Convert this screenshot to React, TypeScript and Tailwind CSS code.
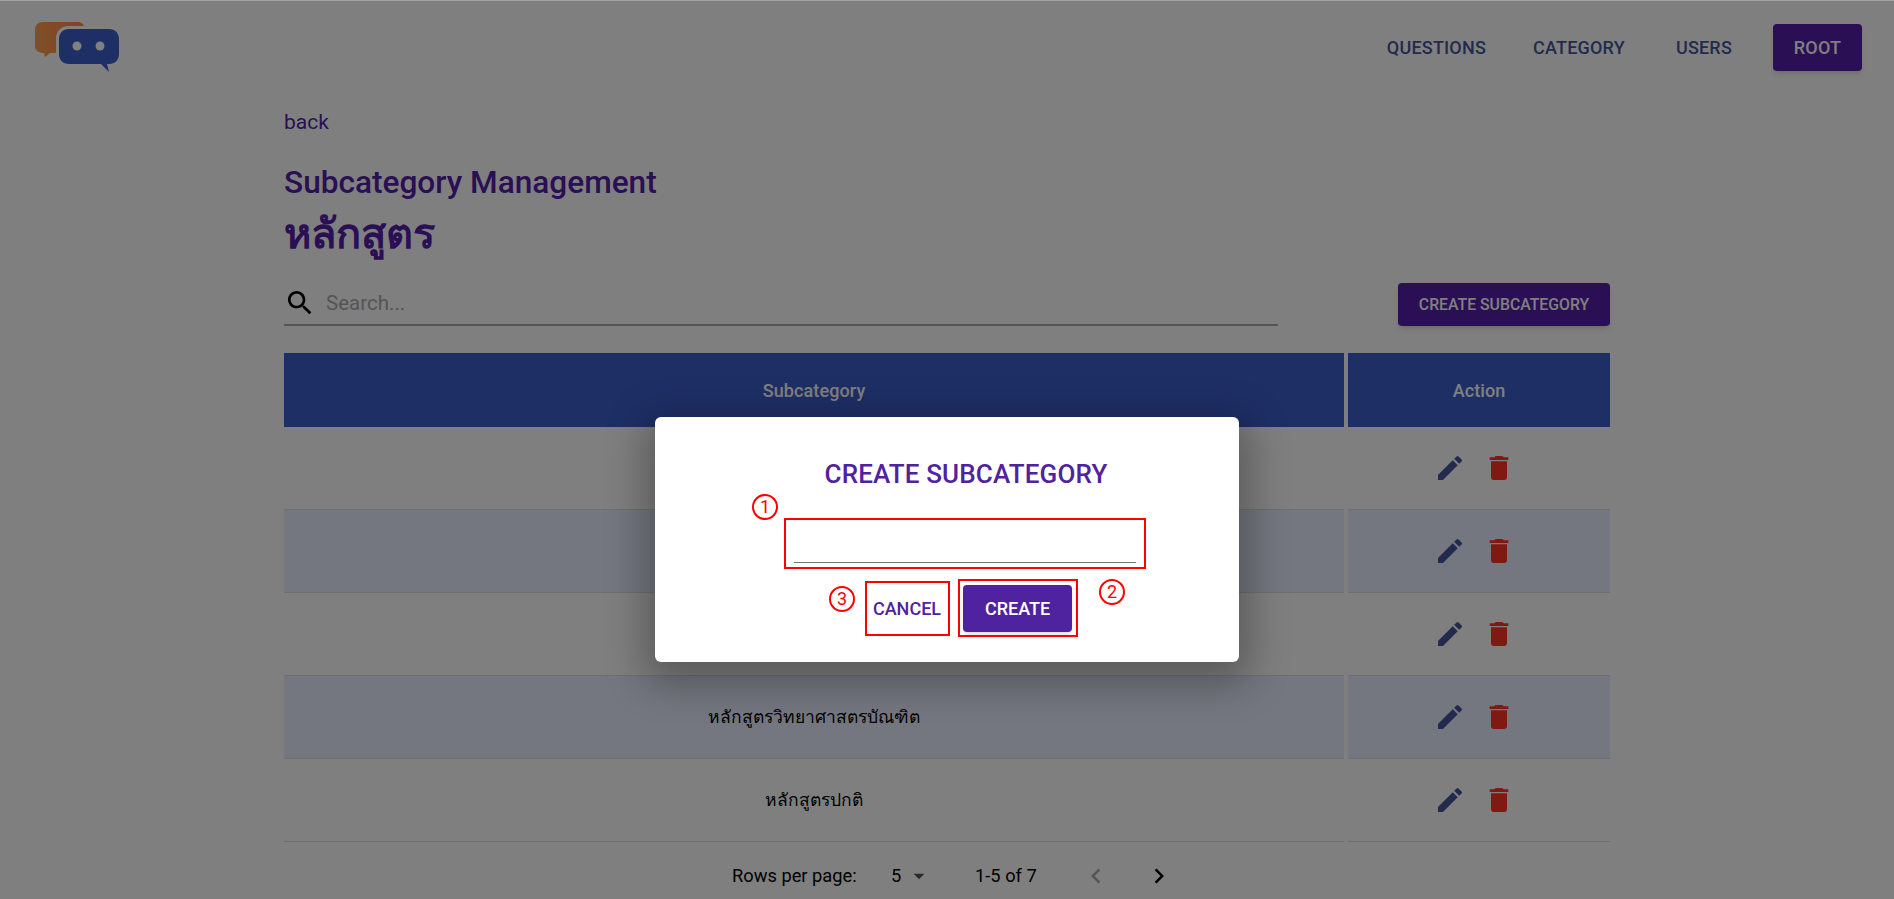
const rows = [
  { name: '', tinted: false },
  { name: '', tinted: true },
  { name: '', tinted: false },
  { name: 'หลักสูตรวิทยาศาสตรบัณฑิต', tinted: true },
  { name: 'หลักสูตรปกติ', tinted: false },
];

// The logo sits above the dialog backdrop, so its colours are the dimmed ones
function Logo() {
  return (
    <svg width="86" height="51" viewBox="0 0 86 51" className="relative z-10 block">
      <defs>
        <linearGradient id="orange" x1="0" y1="0" x2="1" y2="0">
          <stop offset="0" stopColor="#7d5026" />
          <stop offset="1" stopColor="#864026" />
        </linearGradient>
      </defs>
      <path d="M8 0h34c4 0 7 2 7 5v22c0 3-3 4-7 4H15l-5 4-1-4c-5 0-9-2-9-7V8c0-5 3-8 8-8z" fill="url(#orange)" />
      <rect x="21" y="4" width="65" height="41" rx="12" fill="#808080" />
      <path d="M34 7h40c6 0 10 4 10 10v15c0 6-4 10-10 10h-2l2 8-8-8H34c-6 0-10-4-10-10V17c0-6 4-10 10-10z" fill="#1e2f66" />
      <circle cx="42" cy="24" r="4.5" fill="#808080" />
      <circle cx="65" cy="24" r="4.5" fill="#808080" />
    </svg>
  );
}

function Icon({ d, className }: { d: string; className: string }) {
  return (
    <svg viewBox="0 0 24 24" fill="currentColor" className={className}>
      <path d={d} />
    </svg>
  );
}

const editPath =
  'M3 17.25V21h3.75L17.81 9.94l-3.75-3.75L3 17.25zM20.71 7.04c.39-.39.39-1.02 0-1.41l-2.34-2.34a.9959.9959 0 0 0-1.41 0l-1.83 1.83 3.75 3.75 1.83-1.83z';
const deletePath = 'M6 19c0 1.1.9 2 2 2h8c1.1 0 2-.9 2-2V7H6v12zM19 4h-3.5l-1-1h-5l-1 1H5v2h14V4z';
const searchPath =
  'M15.5 14h-.79l-.28-.27C15.41 12.59 16 11.11 16 9.5 16 5.91 13.09 3 9.5 3S3 5.91 3 9.5 5.91 16 9.5 16c1.61 0 3.09-.59 4.23-1.57l.27.28v.79l5 4.99L20.49 19l-4.99-5zm-6 0C7.01 14 5 11.99 5 9.5S7.01 5 9.5 5 14 7.01 14 9.5 11.99 14 9.5 14z';

export default function App() {
  return (
    <div className="relative h-[899px] w-[1894px] overflow-hidden bg-white font-['Roboto','Noto_Sans','Noto_Sans_CJK_SC',sans-serif] text-black">
      {/* Nav */}
      <header className="flex h-[95px] items-start justify-between pl-[35px] pr-[32px] pt-[22px]">
        <Logo />
        <nav className="mt-[2px] flex items-center text-[18px] font-medium uppercase tracking-[0.2px] text-[#44579b]">
          <span className="mr-[47px]">Questions</span>
          <span className="mr-[51px]">Category</span>
          <span className="mr-[41px]">Users</span>
          <span className="flex h-[47px] w-[89px] items-center justify-center rounded bg-[#541eaa] text-white shadow-md">
            Root
          </span>
        </nav>
      </header>

      <main className="mx-auto w-[1326px]">
        <div className="mt-[12px] text-[21px] leading-[30px] text-[#541eaa]">back</div>
        <h2 className="mt-[24px] text-[31.6px] font-medium leading-[44px] text-[#541eaa]">Subcategory Management</h2>
        <h1 className="text-[41.5px] font-bold leading-[58px] text-[#541eaa]">หลักสูตร</h1>

        {/* Search row */}
        <div className="mt-[17px] flex items-start justify-between">
          <div className="flex h-[46px] w-[994px] items-center gap-[10px] border-b-2 border-[#aaa] pt-[2px]">
            <Icon d={searchPath} className="h-[32px] w-[32px] text-black" />
            <span className="text-[20.5px] text-[#aaa]">Search...</span>
          </div>
          <button className="mt-[3px] flex h-[43px] w-[212px] items-center justify-center rounded bg-[#541eaa] text-[15.8px] font-medium uppercase text-white shadow-md">
            Create Subcategory
          </button>
        </div>

        {/* Table */}
        <div className="mt-[27px] flex gap-[4px] text-[18px] font-medium tracking-[0.1px] text-white">
          <div className="flex h-[74px] w-[1060px] items-center justify-center bg-[#3c5ecc]">Subcategory</div>
          <div className="flex h-[74px] w-[262px] items-center justify-center bg-[#3c5ecc]">Action</div>
        </div>
        {rows.map((row, i) => (
          <div key={i} className="flex h-[83px] gap-[4px]">
            <div
              className={`flex w-[1060px] items-center justify-center border-b border-[#dcdcdc] text-[17.5px] font-medium ${
                row.tinted ? 'bg-[#e8eeff]' : 'bg-white'
              }`}
            >
              {row.name}
            </div>
            <div
              className={`flex w-[262px] items-center justify-center gap-[17px] border-b border-[#dcdcdc] pr-[10px] ${
                row.tinted ? 'bg-[#e8eeff]' : 'bg-white'
              }`}
            >
              <Icon d={editPath} className="h-[32px] w-[32px] text-[#44579b]" />
              <Icon d={deletePath} className="h-[32px] w-[32px] text-[#fc3424]" />
            </div>
          </div>
        ))}

        {/* Pagination */}
        <div className="flex h-[68px] items-center pl-[448px] text-[18.3px]">
          <span className="w-[159px]">Rows per page:</span>
          <span className="w-[15px]">5</span>
          <Icon d="M7 10l5 5 5-5z" className="h-[26px] w-[26px] text-[#555]" />
          <span className="ml-[43px] w-[62px]">1-5 of 7</span>
          <Icon d="M15.41 7.41 14 6l-6 6 6 6 1.41-1.41L10.83 12z" className="ml-[44px] h-[30px] w-[30px] text-[#aaa]" />
          <Icon d="M10 6 8.59 7.41 13.17 12l-4.58 4.59L10 18l6-6z" className="ml-[33px] h-[30px] w-[30px] text-black" />
        </div>
      </main>

      {/* Dialog */}
      <div className="absolute inset-0 flex justify-center border-t border-[#a5a5a5] bg-black/50 pt-[416px]">
        <div className="relative h-[245px] w-[584px] rounded-md bg-white pl-[38px] text-center shadow-[0_11px_40px_10px_rgba(0,0,0,0.3)]">
          <div className="mt-[41px] text-[26px] font-medium uppercase leading-[32px] tracking-[0.15px] text-[#4f22a0]">
            Create Subcategory
          </div>
          <div className="mx-auto mt-[28px] flex h-[51px] w-[362px] -translate-x-px items-end border-2 border-[#f00] px-[8px] pb-[4px]">
            <div className="w-full border-b border-[#777]" />
          </div>
          <div className="mt-[10px] flex items-start justify-center pl-[10px] text-[18px] font-medium uppercase">
            <div className="mt-[2px] flex h-[55px] w-[85px] items-center justify-center border-2 border-[#f00] text-[#4f22a0]">
              Cancel
            </div>
            <div className="ml-[8px] flex h-[58px] w-[120px] items-center justify-center border-2 border-[#f00]">
              <button className="flex h-[47px] w-[109px] items-center justify-center rounded bg-[#4f22a0] uppercase text-white shadow-md">
                Create
              </button>
            </div>
          </div>

          {/* Annotation markers */}
          <span className="absolute left-[97px] top-[77px] flex h-[26px] w-[26px] items-center justify-center rounded-full border-2 border-[#f00] text-[18px] leading-none text-[#f00]">
            1
          </span>
          <span className="absolute left-[444px] top-[162px] flex h-[26px] w-[26px] items-center justify-center rounded-full border-2 border-[#f00] text-[18px] leading-none text-[#f00]">
            2
          </span>
          <span className="absolute left-[174px] top-[169px] flex h-[26px] w-[26px] items-center justify-center rounded-full border-2 border-[#f00] text-[18px] leading-none text-[#f00]">
            3
          </span>
        </div>
      </div>
    </div>
  );
}
